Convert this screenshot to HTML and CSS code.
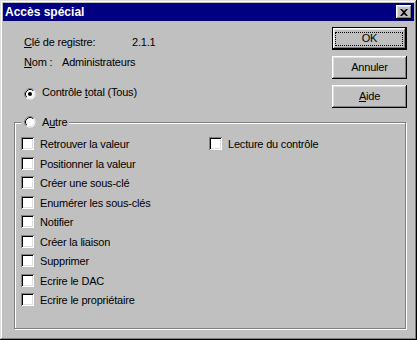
FILE: index.html
```html
<!DOCTYPE html>
<html lang="fr">
<head>
  <meta charset="UTF-8">
  <title>Accès spécial</title>
  <link rel="stylesheet" href="styles.css">
</head>
<body>
  <div class="window">
    <div class="titlebar">
      <span class="title">Accès spécial</span>
      <button class="close" type="button">
        <svg width="8" height="7" viewBox="0 0 8 7"><path d="M0 0h2l2 2 2-2h2L5 3.5 8 7H6L4 5 2 7H0l3-3.5z" fill="#000"/></svg>
      </button>
    </div>

    <div class="content">
      <div class="top">
        <div class="info">
          <div class="line"><span class="key-long"><u>C</u>lé de registre:</span><span>2.1.1</span></div>
          <div class="line"><span class="key-short"><u>N</u>om :</span><span>Administrateurs</span></div>
          <div class="radio full">
            <svg class="radio-dot" width="12" height="12" viewBox="0 0 12 12">
              <circle cx="6" cy="6" r="5.5" fill="#fff"/>
              <path d="M2.11 9.89A5.5 5.5 0 0 1 9.89 2.11" stroke="#808080" fill="none"/>
              <path d="M2.82 9.18A4.5 4.5 0 0 1 9.18 2.82" stroke="#000" fill="none"/>
              <path d="M9.18 2.82A4.5 4.5 0 0 1 2.82 9.18" stroke="#dfdfdf" fill="none"/>
              <circle cx="6" cy="6" r="2" fill="#000"/>
            </svg>
            <span>Contrôle <u>t</u>otal (Tous)</span>
          </div>
        </div>

        <div class="buttons">
          <button class="btn default" type="button">OK</button>
          <button class="btn" type="button">Annuler</button>
          <button class="btn" type="button"><u>A</u>ide</button>
        </div>
      </div>

      <div class="group">
        <div class="radio legend">
          <svg width="12" height="12" viewBox="0 0 12 12">
            <circle cx="6" cy="6" r="5.5" fill="#fff"/>
            <path d="M2.11 9.89A5.5 5.5 0 0 1 9.89 2.11" stroke="#808080" fill="none"/>
            <path d="M2.82 9.18A4.5 4.5 0 0 1 9.18 2.82" stroke="#000" fill="none"/>
            <path d="M9.18 2.82A4.5 4.5 0 0 1 2.82 9.18" stroke="#dfdfdf" fill="none"/>
          </svg>
          <span>A<u>u</u>tre</span>
        </div>

        <div class="checks">
          <div class="col-left">
            <div class="check"><span class="box"></span><span class="label">Retrouver la valeur</span></div>
            <div class="check"><span class="box"></span><span class="label">Positionner la valeur</span></div>
            <div class="check"><span class="box"></span><span class="label">Créer une sous-clé</span></div>
            <div class="check"><span class="box"></span><span class="label">Enumérer les sous-clés</span></div>
            <div class="check"><span class="box"></span><span class="label">Notifier</span></div>
            <div class="check"><span class="box"></span><span class="label">Créer la liaison</span></div>
            <div class="check"><span class="box"></span><span class="label">Supprimer</span></div>
            <div class="check"><span class="box"></span><span class="label">Ecrire le DAC</span></div>
            <div class="check"><span class="box"></span><span class="label">Ecrire le propriétaire</span></div>
          </div>
          <div class="col-right">
            <div class="check"><span class="box"></span><span class="label">Lecture du contrôle</span></div>
          </div>
        </div>
      </div>
    </div>
  </div>
</body>
</html>
```

FILE: styles.css
```css
body {
  margin: 0;
  font-family: "Liberation Sans", Arial, sans-serif;
  font-size: 11px;
  letter-spacing: -0.2px;
  color: #000;
}
.window {
  width: 417px;
  height: 340px;
  box-sizing: border-box;
  padding: 3px;
  background: #c0c0c0;
  box-shadow: inset -1px -1px 0 #000, inset 1px 1px 0 #dfdfdf, inset -2px -2px 0 #808080, inset 2px 2px 0 #fff;
  display: flex;
  flex-direction: column;
}
.titlebar {
  height: 18px;
  background: #000080;
  color: #fff;
  display: flex;
  align-items: center;
  padding-left: 2px;
}
.title {
  font-weight: bold;
  font-size: 12px;
  letter-spacing: 0;
}
.close {
  margin-left: auto;
  margin-right: 2px;
  width: 16px;
  height: 14px;
  padding: 0;
  border: 0;
  background: #c0c0c0;
  box-shadow: inset -1px -1px 0 #000, inset 1px 1px 0 #fff, inset -2px -2px 0 #808080, inset 2px 2px 0 #dfdfdf;
  display: flex;
  align-items: center;
  justify-content: center;
}
.content {
  flex: 1;
  display: flex;
  flex-direction: column;
  padding: 0 7px 0 11px;
}
.top {
  display: flex;
  justify-content: space-between;
  align-items: flex-start;
}
.info {
  padding: 15px 0 0 10px;
}
.line {
  display: flex;
  height: 13px;
  line-height: 13px;
  margin-bottom: 7px;
}
.key-long {
  width: 108px;
}
.key-short {
  width: 38px;
}
.radio {
  display: flex;
  align-items: flex-start;
  gap: 6px;
  line-height: 13px;
}
.radio.full {
  margin-top: 17px;
}
.radio.full svg {
  margin-top: 2px;
}
.buttons {
  display: flex;
  flex-direction: column;
  gap: 6px;
  margin-top: 6px;
}
.btn {
  position: relative;
  width: 75px;
  height: 23px;
  box-sizing: border-box;
  padding: 0 0 2px;
  border: 0;
  background: #c0c0c0;
  color: #000;
  font: inherit;
  letter-spacing: inherit;
  box-shadow: inset -1px -1px 0 #000, inset 1px 1px 0 #fff, inset -2px -2px 0 #808080, inset 2px 2px 0 #dfdfdf;
}
.btn.default {
  box-shadow: inset 0 0 0 1px #000, inset -2px -2px 0 #000, inset 2px 2px 0 #fff, inset -3px -3px 0 #808080, inset 3px 3px 0 #dfdfdf;
}
.btn.default::after {
  content: "";
  position: absolute;
  left: 3px;
  right: 4px;
  top: 5px;
  bottom: 4px;
  border: 1px dotted #000;
}
.group {
  position: relative;
  flex: 1;
  margin: 14px 1px 8px 0;
  padding: 14px 6px 0;
  border: 1px solid #808080;
  box-shadow: 1px 1px 0 #fff, inset 1px 1px 0 #fff;
}
.legend {
  position: absolute;
  top: -7px;
  left: 6px;
  padding: 0 2px 0 3px;
  background: #c0c0c0;
}
.checks {
  display: flex;
}
.col-left {
  width: 188px;
}
.check {
  display: flex;
  align-items: flex-start;
  gap: 6px;
  height: 19.5px;
}
.box {
  width: 13px;
  height: 13px;
  flex: none;
  background: #fff;
  box-shadow: inset 1px 1px 0 #808080, inset -1px -1px 0 #fff, inset 2px 2px 0 #000, inset -2px -2px 0 #dfdfdf;
}
.label {
  margin-top: 1px;
  line-height: 13px;
}
```
